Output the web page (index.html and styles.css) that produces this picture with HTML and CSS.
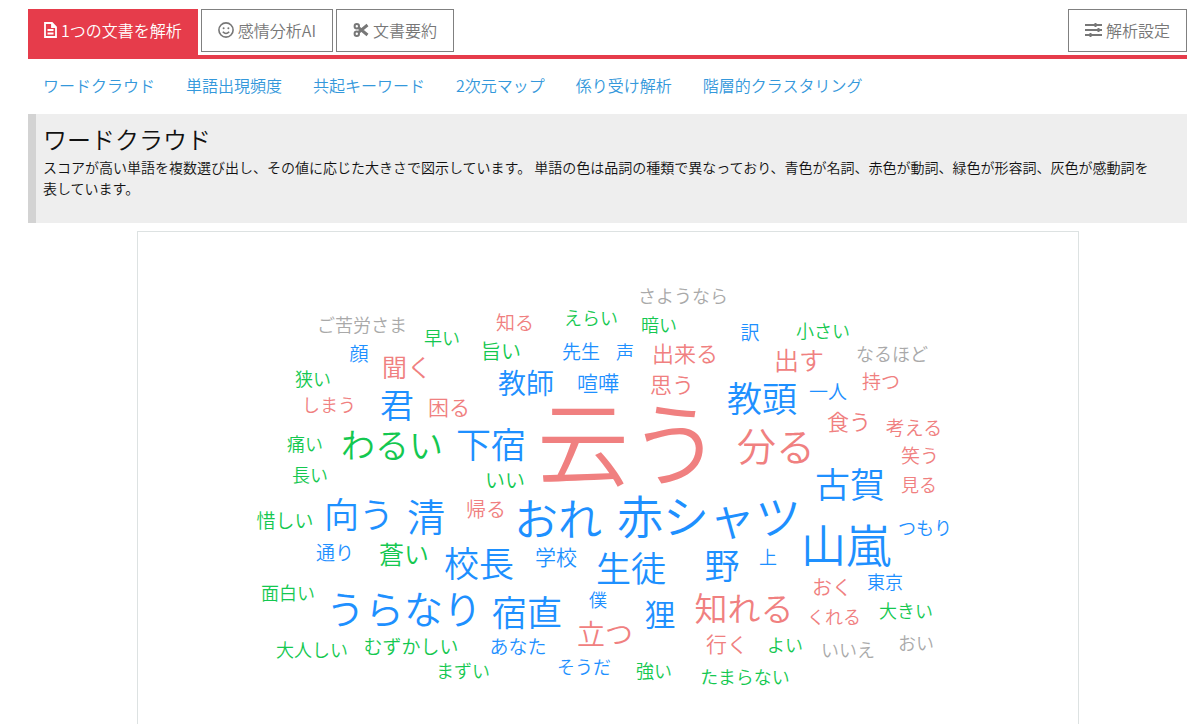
FILE: index.html
```html
<!DOCTYPE html>
<html lang="ja">
<head>
<meta charset="utf-8">
<title>ワードクラウド</title>
<link rel="stylesheet" href="styles.css">
</head>
<body>
<main class="page">
  <nav class="tabs">
    <button class="tab tab-active" type="button">
      <svg class="icon icon-file" viewBox="0 0 13 16" aria-hidden="true"><path d="M1 1h7l4 4v10H1z M8 1v4h4 M3.500 8h6 M3.500 11.500h6"/></svg>
      <span>1つの文書を解析</span>
    </button>
    <button class="tab" type="button">
      <svg class="icon icon-smile" viewBox="0 0 16 16" aria-hidden="true"><circle cx="8" cy="8" r="7.100"/><path d="M4.800 9.800q3.200 3.400 6.400 0"/><circle class="solid" cx="5.600" cy="6.300" r="1"/><circle class="solid" cx="10.400" cy="6.300" r="1"/></svg>
      <span>感情分析AI</span>
    </button>
    <button class="tab" type="button">
      <svg class="icon icon-cut" viewBox="0 0 16 16" aria-hidden="true"><circle cx="3.800" cy="4.300" r="2.200"/><circle cx="3.800" cy="11.700" r="2.200"/><path class="blade" d="M5.500 5.600L14.500 13 M5.500 10.400L14.500 3"/></svg>
      <span>文書要約</span>
    </button>
    <button class="tab tab-settings" type="button">
      <svg class="icon icon-sliders" viewBox="0 0 17 14" aria-hidden="true"><path d="M0 2h17M0 7h17M0 12h17"/><path class="knob" d="M10.500 0v4M13.500 5v4M5.500 10v4"/></svg>
      <span>解析設定</span>
    </button>
  </nav>

  <nav class="links">
    <a href="#cloud">ワードクラウド</a>
    <a href="#frequency">単語出現頻度</a>
    <a href="#cooccurrence">共起キーワード</a>
    <a href="#map">2次元マップ</a>
    <a href="#dependency">係り受け解析</a>
    <a href="#cluster">階層的クラスタリング</a>
  </nav>

  <section class="intro">
    <h1>ワードクラウド</h1>
    <p>スコアが高い単語を複数選び出し、その値に応じた大きさで図示しています。 単語の色は品詞の種類で異なっており、青色が名詞、赤色が動詞、緑色が形容詞、灰色が感動詞を表しています。</p>
  </section>

  <section class="cloud" id="cloud">
    <svg class="words" viewBox="138 233 940 520">
      <g class="interjection">
        <text x="683" y="296" font-size="18">さようなら</text>
        <text x="362" y="325" font-size="18">ご苦労さま</text>
        <text x="892" y="354" font-size="18">なるほど</text>
        <text x="848" y="650" font-size="18">いいえ</text>
        <text x="916" y="643" font-size="18">おい</text>
      </g>
      <g class="adjective">
        <text x="442" y="338" font-size="18">早い</text>
        <text x="313" y="379" font-size="18">狭い</text>
        <text x="305" y="444" font-size="18">痛い</text>
        <text x="392" y="444" font-size="34">わるい</text>
        <text x="310" y="475" font-size="18">長い</text>
        <text x="505" y="480" font-size="20">いい</text>
        <text x="501" y="351" font-size="20">旨い</text>
        <text x="591" y="318" font-size="18">えらい</text>
        <text x="659" y="325" font-size="18">暗い</text>
        <text x="823" y="331" font-size="18">小さい</text>
        <text x="285" y="520" font-size="19">惜しい</text>
        <text x="404" y="554" font-size="25">蒼い</text>
        <text x="288" y="593" font-size="18">面白い</text>
        <text x="906" y="611" font-size="18">大きい</text>
        <text x="312" y="650" font-size="18">大人しい</text>
        <text x="411" y="646" font-size="19">むずかしい</text>
        <text x="785" y="645" font-size="18">よい</text>
        <text x="463" y="671" font-size="18">まずい</text>
        <text x="654" y="671" font-size="18">強い</text>
        <text x="745" y="677" font-size="18">たまらない</text>
      </g>
      <g class="noun">
        <text x="359" y="353" font-size="19">顔</text>
        <text x="397" y="404" font-size="34">君</text>
        <text x="491" y="443" font-size="35">下宿</text>
        <text x="526" y="383" font-size="28">教師</text>
        <text x="581" y="351" font-size="19">先生</text>
        <text x="625" y="352" font-size="18">声</text>
        <text x="598" y="383" font-size="21">喧嘩</text>
        <text x="750" y="332" font-size="19">訳</text>
        <text x="762" y="397" font-size="35">教頭</text>
        <text x="828" y="391" font-size="19">一人</text>
        <text x="850" y="483" font-size="35">古賀</text>
        <text x="359" y="513" font-size="35">向う</text>
        <text x="426" y="515" font-size="38">清</text>
        <text x="558" y="518" font-size="44">おれ</text>
        <text x="709" y="515" font-size="46">赤シャツ</text>
        <text x="335" y="552" font-size="19">通り</text>
        <text x="479" y="562" font-size="35">校長</text>
        <text x="556" y="557" font-size="21">学校</text>
        <text x="631" y="567" font-size="35">生徒</text>
        <text x="722" y="564" font-size="35">野</text>
        <text x="768" y="557" font-size="18">上</text>
        <text x="846" y="544" font-size="45">山嵐</text>
        <text x="925" y="528" font-size="18">つもり</text>
        <text x="404" y="608" font-size="39">うらなり</text>
        <text x="527" y="611" font-size="35">宿直</text>
        <text x="598" y="600" font-size="18">僕</text>
        <text x="660" y="613" font-size="31">狸</text>
        <text x="885" y="582" font-size="18">東京</text>
        <text x="518" y="646" font-size="19">あなた</text>
        <text x="584" y="667" font-size="18">そうだ</text>
      </g>
      <g class="verb">
        <text x="515" y="322" font-size="19">知る</text>
        <text x="407" y="367" font-size="25">聞く</text>
        <text x="329" y="405" font-size="18">しまう</text>
        <text x="449" y="407" font-size="21">困る</text>
        <text x="685" y="353" font-size="22">出来る</text>
        <text x="672" y="384" font-size="22">思う</text>
        <text x="629" y="439" font-size="92">云う</text>
        <text x="799" y="360" font-size="25">出す</text>
        <text x="881" y="381" font-size="19">持つ</text>
        <text x="849" y="421" font-size="22">食う</text>
        <text x="914" y="427" font-size="19">考える</text>
        <text x="920" y="455" font-size="19">笑う</text>
        <text x="776" y="445" font-size="39">分る</text>
        <text x="919" y="485" font-size="18">見る</text>
        <text x="486" y="509" font-size="20">帰る</text>
        <text x="744" y="608" font-size="33">知れる</text>
        <text x="832" y="587" font-size="20">おく</text>
        <text x="834" y="617" font-size="18">くれる</text>
        <text x="605" y="634" font-size="28">立つ</text>
        <text x="727" y="644" font-size="21">行く</text>
      </g>
    </svg>
  </section>
</main>
</body>
</html>
```

FILE: styles.css
```css
* { box-sizing: border-box; }

body {
  margin: 0;
  background: #fff;
  color: #111;
  font-family: "Noto Sans CJK JP", "Noto Sans", sans-serif;
  font-weight: 350;
  font-size: 16px;
  overflow: hidden;
}

.page { padding: 9px 13px 0 28px; }

.tabs {
  display: flex;
  align-items: flex-start;
  gap: 3px;
  border-bottom: 4px solid #e63c4b;
}

.tab {
  display: flex;
  align-items: center;
  gap: 4px;
  height: 43px;
  padding: 0 16px 2px;
  border: 1px solid #808080;
  border-radius: 0;
  background: #fff;
  color: #777;
  font: inherit;
  white-space: nowrap;
}

.tab-active {
  height: 46px;
  padding: 0 15px 5px;
  border-color: #e63c4b;
  background: #e63c4b;
  color: #fff;
}

.tab-settings { margin-left: auto; }

.icon {
  height: 16px;
  fill: none;
  stroke: currentColor;
  stroke-width: 2;
}
.icon-smile { width: 16px; stroke-width: 1.6; }
.icon-file { width: 13px; stroke-width: 1.8; }
.icon-cut { width: 16px; }
.icon-sliders { width: 17px; height: 14px; stroke-width: 1.8; }
.solid { fill: currentColor; stroke: none; }
.blade { stroke-width: 3; }
.knob { stroke-width: 2; }

.links {
  display: flex;
  gap: 31px;
  padding: 13px 15px 16px;
  line-height: 26px;
}
.links a { color: #3498db; text-decoration: none; white-space: nowrap; }

.intro {
  padding: 10px 26px 24px 7px;
  border-left: 8px solid #d3d3d3;
  background: #eee;
}
.intro h1 {
  margin: 0;
  font-size: 24px;
  font-weight: 350;
  line-height: 30px;
}
.intro p {
  margin: 3px 0 0;
  font-size: 14px;
  line-height: 21px;
}

.cloud {
  width: 82%;
  max-width: 942px;
  margin: 8px auto 0;
  border: 1px solid #dde2e2;
}

.words { display: block; width: 100%; }
.words text {
  text-anchor: middle;
  dominant-baseline: central;
}
.noun { fill: #1e90ff; }
.verb { fill: #f08080; }
.adjective { fill: #14c850; }
.interjection { fill: #a9a9a9; }
```
